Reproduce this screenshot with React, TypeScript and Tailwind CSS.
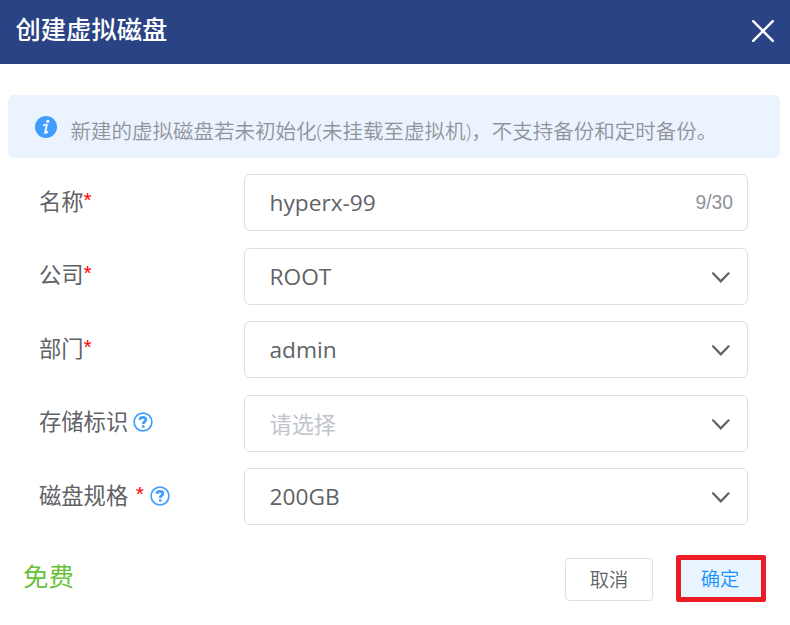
import React from "react";

const cjk = "font-['Open_Sans','Noto_Sans_CJK_SC',sans-serif]";

function Chevron() {
  return (
    <svg className="mt-[1px] mr-[15px] h-[22px] w-[22px]" viewBox="0 0 22 22" fill="none" stroke="#606266" strokeWidth="2.2" strokeLinecap="round">
      <path d="M3 7.3l7.8 8 7.8-8" />
    </svg>
  );
}

function Help({ className = "" }: { className?: string }) {
  return (
    <svg className={`h-[20px] w-[20px] ${className}`} viewBox="0 0 20 20" fill="none" stroke="#409eff">
      <circle cx="10" cy="10" r="8.9" strokeWidth="1.7" />
      <path d="M6.8 7.9C7 6.1 8.2 5.4 9.9 5.4s3 .9 3 2.4c0 1.8-2.7 1.9-2.7 4.1" strokeWidth="2.7" />
      <path d="M8.9 14.5h2.6" strokeWidth="2.4" />
    </svg>
  );
}

function Row({ label, star, help, children }: { label: string; star?: string; help?: string; children: React.ReactNode }) {
  return (
    <div className="flex items-center">
      <div className="flex w-[205px] shrink-0 items-center pb-[2px] text-[22.3px] leading-[30px] text-[#606266]">
        <span className="whitespace-nowrap">{label}</span>
        {star && <span className={`-mt-[5px] font-['Liberation_Sans'] text-[21px] leading-[25px] text-[#ff0000] ${star}`}>*</span>}
        {help && <Help className={help} />}
      </div>
      <div className="flex h-[57px] w-[504px] items-center justify-between rounded-[6px] border border-[#dcdfe6] pl-[24.5px] text-[22.7px] text-[#606266]">
        {children}
      </div>
    </div>
  );
}

export default function App() {
  return (
    <div className={`flex h-[625px] w-[790px] flex-col bg-white ${cjk}`}>
      <header className="flex h-[64px] items-center justify-between bg-[#2a4385] pr-[16px] pl-[15.5px]">
        <h1 className="pb-[4px] text-[25.3px] font-medium text-white">创建虚拟磁盘</h1>
        <svg className="mb-[2px] h-[22px] w-[22px]" viewBox="0 0 22 22" stroke="#fff" strokeWidth="2.4" strokeLinecap="round">
          <path d="M1.2 1.2l19.6 19.6M20.8 1.2L1.2 20.8" />
        </svg>
      </header>
      <div className="mx-[8px] mt-[31px] flex h-[63px] w-[772px] items-center rounded-[6px] bg-[#ebf3ff] pl-[27px]">
        <svg className="h-[22px] w-[22px]" viewBox="0 0 22 22">
          <circle cx="11" cy="11" r="11" fill="#409eff" />
          <circle cx="12.8" cy="5.3" r="1.6" fill="#fff" />
          <path d="M8.2 9.6c1.7-.8 3.3-1.2 3.6-.9.5.5-2 7-1.7 8 .2.7 1.6-.2 2.6-1.3" stroke="#fff" strokeWidth="1.8" fill="none" />
        </svg>
        <p className="ml-[13.5px] pt-[10px] text-[20.5px] font-[350] whitespace-nowrap text-[#909399]">新建的虚拟磁盘若未初始化(未挂载至虚拟机)，不支持备份和定时备份。</p>
      </div>
      <main className="mt-[16px] ml-[39px] flex flex-col gap-[16.5px]">
        <Row label="名称" star="ml-0">
          <span className="pt-[2px]">hyperx-99</span>
          <span className="mt-[1px] mr-[14px] font-['Liberation_Sans'] text-[19.3px] text-[#909399]">9/30</span>
        </Row>
        <Row label="公司" star="ml-0"><span className="pt-[2px]">ROOT</span><Chevron /></Row>
        <Row label="部门" star="ml-0"><span className="pt-[2px]">admin</span><Chevron /></Row>
        <Row label="存储标识" help="ml-[5px]"><span className="pt-[3px] text-[22.2px] text-[#c0c4cc]">请选择</span><Chevron /></Row>
        <Row label="磁盘规格" star="ml-[7.5px]" help="ml-[6px]"><span className="pt-[2px]">200GB</span><Chevron /></Row>
      </main>
      <footer className="mt-[30px] flex items-center pl-[23px]">
        <span className="w-[542px] pb-[4px] text-[25.4px] text-[#67c23a]">免费</span>
        <button className="mt-[2px] h-[43px] w-[88px] rounded-[4px] border border-[#dcdfe6] pt-px text-[19.3px] font-[350] text-[#606266]">取消</button>
        <button className="ml-[23px] h-[47px] w-[90px] rounded-[2px] border-[5px] border-[#ed1c24] bg-[#e8f4ff] pt-[2px] pr-[2px] text-[19.3px] font-[350] text-[#1890ff]">确定</button>
      </footer>
    </div>
  );
}
